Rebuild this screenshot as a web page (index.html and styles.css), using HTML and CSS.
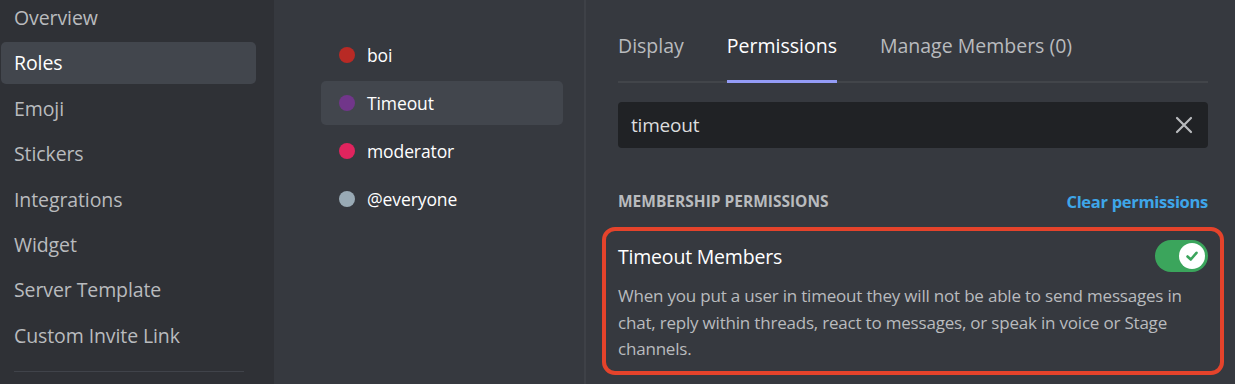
FILE: index.html
```html
<!doctype html>
<html lang="en">
  <head>
    <meta charset="UTF-8" />
    <title>Server Settings - Roles</title>
    <link rel="stylesheet" href="styles.css">
  </head>
  <body>
    <div class="app">
      <nav class="sidebar">
        <ul class="nav-list">
          <li class="nav-item">Overview</li>
          <li class="nav-item active">Roles</li>
          <li class="nav-item">Emoji</li>
          <li class="nav-item">Stickers</li>
          <li class="nav-item">Integrations</li>
          <li class="nav-item">Widget</li>
          <li class="nav-item">Server Template</li>
          <li class="nav-item">Custom Invite Link</li>
        </ul>
        <div class="nav-divider"></div>
      </nav>

      <div class="roles">
        <div class="role">
          <span class="role-dot dot-boi"></span>
          <span class="role-name">boi</span>
        </div>
        <div class="role selected">
          <span class="role-dot dot-timeout"></span>
          <span class="role-name">Timeout</span>
        </div>
        <div class="role">
          <span class="role-dot dot-mod"></span>
          <span class="role-name">moderator</span>
        </div>
        <div class="role">
          <span class="role-dot dot-everyone"></span>
          <span class="role-name">@everyone</span>
        </div>
      </div>

      <main class="content">
        <div class="tabs">
          <div class="tab">Display</div>
          <div class="tab active">Permissions</div>
          <div class="tab">Manage Members (0)</div>
        </div>

        <div class="search">
          <span class="search-text">timeout</span>
          <svg class="search-clear" width="18" height="18" viewBox="0 0 18 18">
            <path d="M2 2 L16 16 M16 2 L2 16" stroke="#b9bbbe" stroke-width="2.2" stroke-linecap="round" />
          </svg>
        </div>

        <div class="section-header">
          <span class="section-title">Membership Permissions</span>
          <a class="clear-link">Clear permissions</a>
        </div>

        <div class="permission">
          <div class="permission-row">
            <span class="permission-name">Timeout Members</span>
            <div class="toggle">
              <span class="toggle-knob">
                <svg width="16" height="16" viewBox="0 0 16 16">
                  <path d="M3.5 8.5 L6.8 11.5 L12.5 4.8" fill="none" stroke="#3ba55c" stroke-width="2.6" stroke-linecap="round" stroke-linejoin="round" />
                </svg>
              </span>
            </div>
          </div>
          <p class="permission-desc">
            When you put a user in timeout they will not be able to send messages in
            chat, reply within threads, react to messages, or speak in voice or Stage
            channels.
          </p>
        </div>
      </main>
    </div>
  </body>
</html>
```

FILE: styles.css
```css
:root {
  --bg-primary: #36393f;
  --bg-secondary: #2f3136;
  --bg-tertiary: #202225;
  --bg-selected: #42464d;
  --text-normal: #dcddde;
  --text-muted: #b9bbbe;
  --header: #ffffff;
  --link: #3ea6e9;
  --green: #3ba55c;
}

* {
  margin: 0;
  padding: 0;
  box-sizing: border-box;
}

body {
  font-family: "Open Sans", "Noto Sans", sans-serif;
  background: var(--bg-primary);
  color: var(--text-normal);
  height: 384px;
  overflow: hidden;
  -webkit-font-smoothing: antialiased;
}

.app {
  display: flex;
  height: 384px;
}

/* left settings nav */
.sidebar {
  width: 274px;
  flex-shrink: 0;
  background: var(--bg-secondary);
  padding-left: 1px;
}

.nav-list {
  list-style: none;
  margin-top: -3px;
  display: flex;
  flex-direction: column;
  gap: 3.4px;
}

.nav-item {
  width: 255px;
  height: 42px;
  line-height: 42px;
  padding-left: 13px;
  border-radius: 5px;
  font-size: 19.5px;
  font-weight: 500;
  color: var(--text-muted);
  letter-spacing: -0.1px;
}

.nav-item.active {
  background: var(--bg-selected);
  color: #ffffff;
}

.nav-divider {
  margin: 14px 0 0 13px;
  width: 230px;
  height: 1px;
  background: #40434a;
}

/* role list */
.roles {
  width: 312px;
  flex-shrink: 0;
  padding: 33px 0 0 47px;
  border-right: 2px solid #3e4147;
  display: flex;
  flex-direction: column;
  gap: 4px;
}

.role {
  width: 242px;
  height: 44px;
  display: flex;
  align-items: center;
  gap: 12px;
  padding-left: 18px;
  border-radius: 5px;
}

.role.selected {
  background: var(--bg-selected);
}

.role-dot {
  width: 16px;
  height: 16px;
  border-radius: 50%;
}

.dot-boi { background: #b82a25; }
.dot-timeout { background: #71368a; }
.dot-mod { background: #e0245e; }
.dot-everyone { background: #99aab5; }

.role-name {
  font-size: 17.5px;
  font-weight: 500;
  color: #ffffff;
  letter-spacing: -0.1px;
}

/* main panel */
.content {
  flex: 1;
  padding: 0 27px 0 32px;
}

.tabs {
  display: flex;
  gap: 43px;
  border-bottom: 2px solid #42454a;
  height: 83px;
}

.tab {
  padding-top: 32px;
  line-height: 28px;
  font-size: 19.5px;
  font-weight: 500;
  color: var(--text-muted);
}

.tab.active {
  color: #ffffff;
  border-bottom: 3px solid #949cf7;
  margin-bottom: -2px;
}

.search {
  margin-top: 19px;
  height: 46px;
  background: var(--bg-tertiary);
  border-radius: 4px;
  display: flex;
  align-items: center;
  justify-content: space-between;
  padding: 0 15px 0 13px;
}

.search-text {
  font-size: 19px;
  color: var(--text-normal);
  letter-spacing: -0.2px;
}

.section-header {
  margin-top: 40px;
  display: flex;
  justify-content: space-between;
  align-items: center;
  height: 26px;
}

.section-title {
  font-size: 15.5px;
  font-weight: 700;
  text-transform: uppercase;
  color: var(--text-muted);
}

.clear-link {
  font-size: 16.5px;
  font-weight: 700;
  color: var(--link);
  letter-spacing: -0.3px;
}

/* highlighted permission */
.permission {
  margin: 13px -16px 0;
  border: 4px solid #e5432b;
  border-radius: 13px;
  padding: 9px 12px 8px;
}

.permission-row {
  display: flex;
  justify-content: space-between;
  align-items: center;
  height: 32px;
}

.permission-name {
  font-size: 19.5px;
  font-weight: 500;
  color: #ffffff;
  letter-spacing: -0.2px;
}

.toggle {
  width: 53px;
  height: 32px;
  border-radius: 16px;
  background: var(--green);
  display: flex;
  align-items: center;
  justify-content: flex-end;
  padding-right: 3px;
}

.toggle-knob {
  width: 26px;
  height: 26px;
  border-radius: 50%;
  background: #ffffff;
  display: flex;
  align-items: center;
  justify-content: center;
}

.permission-desc {
  margin-top: 11px;
  font-size: 17px;
  line-height: 26.5px;
  color: var(--text-muted);
  letter-spacing: -0.2px;
}
```
